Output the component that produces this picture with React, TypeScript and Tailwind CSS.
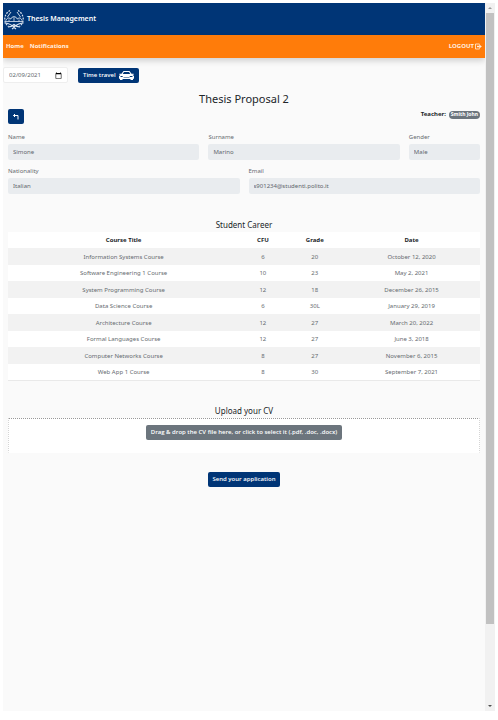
import { useState } from "react";
import type { ReactNode } from "react";

const courses = [
  ["Information Systems Course", "6", "20", "October 12, 2020"],
  ["Software Engineering 1 Course", "10", "23", "May 2, 2021"],
  ["System Programming Course", "12", "18", "December 26, 2015"],
  ["Data Science Course", "6", "30L", "January 29, 2019"],
  ["Architecture Course", "12", "27", "March 20, 2022"],
  ["Formal Languages Course", "12", "27", "June 3, 2018"],
  ["Computer Networks Course", "8", "27", "November 6, 2015"],
  ["Web App 1 Course", "8", "30", "September 7, 2021"],
];

function Seal() {
  return (
    <svg viewBox="0 0 22 22" className="size-[22px] shrink-0" fill="none" stroke="#dfe7f1" aria-hidden="true">
      <path d="M7 2.500A9.500 9.500 0 0 0 5.500 18.500M15 2.500A9.500 9.500 0 0 1 16.500 18.500" strokeWidth="1.200" strokeDasharray="1.800 1.200" />
      <path d="M8 4 4.500 9M14 4 17.500 9" strokeWidth=".9" />
      <path d="M3 12.500c1-3 3-3 4.500-1.500 2-3 5-3 7 0 1.500-1.500 3.500-1.500 4.500 1.500" strokeWidth="1" />
      <path d="M2.500 13.500h17M6 11.500v2M11 9.500v4M16 11.500v2" strokeWidth=".8" />
      <path d="M1.500 15c4 0 6 1 9.500 4 3.500-3 5.500-4 9.500-4M5 19c2.500 0 4-.5 6-2.500 2 2 3.500 2.500 6 2.500M9 21l2-1.500 2 1.500" strokeWidth="1.100" />
    </svg>
  );
}

function Car() {
  return (
    <svg viewBox="0 0 15 9" className="h-[9px] w-[15px]" fill="white" aria-hidden="true">
      <path fillRule="evenodd" d="M4.500 0h6l2 2.800h2.200v1h-1.200l1.500 1.200v2.700h-1V9h-2.500V7.900h-8V9H1V7.700H0V5l1.500-1.200H.3v-1h2.200zM5 1 3.700 3h7.600L10 1zM1.500 5v1H4l-.7-1zm9.500 0-.5 1h3V5zM4.500 6.400v.6h6v-.6z" />
    </svg>
  );
}

function Field({ id, label, value, className }: { id: string; label: string; value: string; className: string }) {
  return (
    <div className={className}>
      <label htmlFor={id} className="block h-[15px] leading-[17px]">{label}</label>
      <input
        id={id}
        value={value}
        disabled
        className="block h-4 w-full rounded-[2px] bg-[#e9ecef] px-[5px] text-[#5f666d]"
      />
    </div>
  );
}

function SectionTitle({ children }: { children: ReactNode }) {
  return <h2 className="h-4 text-center text-[8px] leading-[17px] text-[#212529]">{children}</h2>;
}

export default function App() {
  const [date, setDate] = useState("2021-02-09");

  return (
    <div className="h-screen bg-white pt-[3px] pr-[3px] pb-[9px] pl-[3px] font-['Noto_Sans','Open_Sans',sans-serif] text-[6px] text-[#666b70]">
      <div className="flex h-full overflow-hidden">
        <div className="min-w-0 flex-1 bg-[#fafafa]">
          <header className="flex h-8 items-center gap-[2px] bg-[#003576] text-[7px] font-semibold text-white">
            <Seal />
            <span>Thesis Management</span>
          </header>
          <nav className="flex h-[23px] items-center gap-[6px] bg-[#ff7c0a] px-[3px] font-['Open_Sans','Noto_Sans',sans-serif] font-bold text-[#fff0e2] shadow-[0_3px_6px_rgba(0,0,0,0.16)]">
            <a href="#home">Home</a>
            <a href="#notifications">Notifications</a>
            <a href="#logout" className="ml-auto flex items-center gap-px">
              LOGOUT
              <svg viewBox="0 0 7 7" className="size-[7px]" fill="none" stroke="currentColor" strokeWidth=".8" aria-hidden="true">
                <path d="M4.500 1.500V1H.5v5h4v-.5" />
                <path d="M2 3.500h2.500" strokeWidth="1.400" />
                <path d="M4.300 1.500 6.800 3.500 4.300 5.500z" fill="currentColor" stroke="none" />
              </svg>
            </a>
          </nav>

          <div className="mt-[9px] flex h-4 items-center gap-[10px]">
            <input
              type="date"
              aria-label="Current date"
              value={date}
              onChange={(event) => setDate(event.target.value)}
              className="h-4 w-[65px] rounded-[2px] border border-[#eeeeee] bg-white px-[5px] [&::-webkit-calendar-picker-indicator]:m-0 [&::-webkit-calendar-picker-indicator]:size-[7px] [&::-webkit-calendar-picker-indicator]:p-0 [&::-webkit-datetime-edit]:p-0 [&::-webkit-datetime-edit-day-field]:p-0 [&::-webkit-datetime-edit-month-field]:p-0 [&::-webkit-datetime-edit-year-field]:p-0"
            />
            <button type="button" className="flex h-[15px] items-center gap-[3px] rounded-[2px] bg-[#003576] px-[5px] font-['Open_Sans','Noto_Sans',sans-serif] font-semibold text-white">
              Time travel
              <Car />
            </button>
          </div>

          <main className="px-[5px] pt-2">
            <h1 className="h-4 text-center text-[11px] leading-4 text-[#212529]">Thesis Proposal 2</h1>
            <div className="mt-[2px] flex items-start justify-between">
              <button type="button" aria-label="Back" className="flex h-[15px] w-4 items-center justify-center rounded-[2px] bg-[#003576] text-white">
                <svg viewBox="0 0 8 8" className="size-2" fill="none" stroke="currentColor" strokeWidth="1" aria-hidden="true">
                  <path d="M3 1 1.500 2.500 3 4M1.500 2.500H6V6.500" />
                </svg>
              </button>
              <div className="flex items-center gap-[3px] pt-px font-bold text-[#212529]">
                Teacher:
                <span className="flex h-2 items-center rounded-full bg-[#6c757d] px-[2px] text-[5px] text-white">Smith John</span>
              </div>
            </div>

            <form className="mt-[5px] grid grid-cols-12 gap-x-[9px] gap-y-[3px]">
              <Field id="name" label="Name" value="Simone" className="col-span-5" />
              <Field id="surname" label="Surname" value="Marino" className="col-span-5" />
              <Field id="gender" label="Gender" value="Male" className="col-span-2" />
              <Field id="nationality" label="Nationality" value="Italian" className="col-span-6" />
              <Field id="email" label="Email" value="s901234@studenti.polito.it" className="col-span-6" />
            </form>

            <section className="mt-[22px]">
              <SectionTitle>Student Career</SectionTitle>
              <table className="w-full table-fixed border-collapse border-b border-[#e9e9e9] bg-white text-center">
                <colgroup>
                  <col className="w-[49%]" />
                  <col className="w-[10%]" />
                  <col className="w-[12%]" />
                  <col className="w-[29%]" />
                </colgroup>
                <thead>
                  <tr className="h-4 text-[#212529]">
                    {["Course Title", "CFU", "Grade", "Date"].map((title) => (
                      <th key={title} scope="col" className="p-0 pt-px font-bold">{title}</th>
                    ))}
                  </tr>
                </thead>
                <tbody>
                  {courses.map(([title, cfu, grade, day]) => (
                    <tr key={title} className="h-4 odd:h-[17px] odd:bg-[#f2f2f2]">
                      <td className="p-0 pt-px">{title}</td>
                      <td className="p-0 pt-px">{cfu}</td>
                      <td className="p-0 pt-px">{grade}</td>
                      <td className="p-0 pt-px">{day}</td>
                    </tr>
                  ))}
                </tbody>
              </table>
            </section>

            <section className="mt-[21px]">
              <SectionTitle>Upload your CV</SectionTitle>
              <div className="flex h-[35px] items-start justify-center border border-dotted border-[#d5d5d5] border-t-[#999999] border-b-white bg-white pt-[6px]">
                <button type="button" className="h-[15px] rounded-[2px] bg-[#6c757d] px-[5px] font-['Open_Sans','Noto_Sans',sans-serif] font-semibold text-white">
                  Drag &amp; drop the CV file here, or click to select it (.pdf, .doc, .docx)
                </button>
              </div>
            </section>
            <div className="mt-[19px] flex justify-center">
              <button type="button" className="h-[15px] rounded-[2px] bg-[#003576] px-[5px] font-['Open_Sans','Noto_Sans',sans-serif] font-semibold text-white">
                Send your application
              </button>
            </div>
          </main>
        </div>
        <div className="flex w-[10px] flex-col items-center bg-[#f1f1f1]" aria-hidden="true">
          <svg viewBox="0 0 10 10" className="size-[10px] shrink-0" fill="#999999"><path d="M3 6h4L5 4z" /></svg>
          <div className="w-2 flex-[611] bg-[#c1c1c1]" />
          <div className="flex-[77]" />
          <svg viewBox="0 0 10 10" className="size-[10px] shrink-0" fill="#505050"><path d="M3 4h4L5 6z" /></svg>
        </div>
      </div>
    </div>
  );
}
